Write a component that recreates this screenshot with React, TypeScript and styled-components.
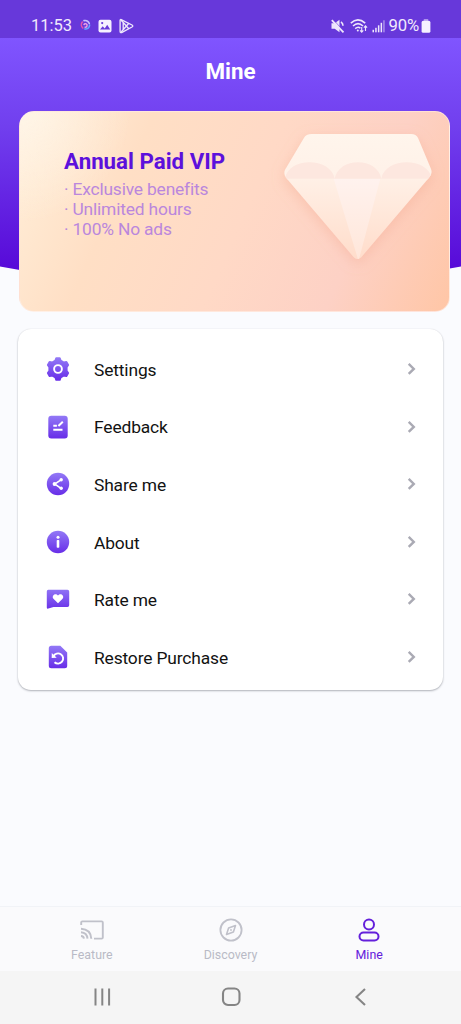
import React from "react";
import styled, { createGlobalStyle } from "styled-components";

const GlobalStyle = createGlobalStyle`
  * { box-sizing: border-box; }
  body { margin: 0; background: #fafbfe; font-family: Roboto, "Liberation Sans", sans-serif; }
  svg { display: block; flex: none; }
`;

const Screen = styled.div`
  position: relative;
  width: 461px;
  height: 1024px;
  display: flex;
  flex-direction: column;
  overflow: hidden;
  background: #fafbfe;
`;

const Backdrop = styled.svg`
  position: absolute;
  top: 0;
  left: 0;
`;

const StatusBar = styled.header`
  position: relative;
  height: 37.5px;
  padding: 14px 30.5px 0 31px;
  display: flex;
  justify-content: space-between;
  background: #6738da;
  color: #f1eafd;
`;

const StatusGroup = styled.div<{ $gap: number }>`
  display: flex;
  align-items: center;
  gap: ${(p) => p.$gap}px;
  height: 23px;
`;

const Clock = styled.span`
  font-size: 16.5px;
  line-height: 23px;
`;

const BatteryLevel = styled.span`
  margin: 0 -2.5px 0 0;
  font-size: 16.7px;
  line-height: 23px;
  letter-spacing: -0.2px;
`;

const Title = styled.h1`
  position: relative;
  margin: 0;
  height: 73.5px;
  padding-top: 19px;
  font-size: 22.4px;
  line-height: 28px;
  font-weight: 700;
  text-align: center;
  color: #fff;
`;

const VipCard = styled.section`
  position: relative;
  flex: none;
  width: 431px;
  height: 201px;
  margin-left: 18.5px;
  padding: 36px 15.5px 0 44.5px;
  display: flex;
  justify-content: space-between;
  border-radius: 15px;
  border: 1px solid rgba(255, 238, 232, 0.65);
  background:
    radial-gradient(ellipse 110px 110px at 0 0, rgba(255, 248, 238, 0.7), rgba(255, 244, 226, 0) 100%),
    linear-gradient(114deg, #ffefd9 0%, #ffdfc5 26%, #ffd9c6 52%, #fdd1c5 76%, #ffc6a6 100%);
`;

const VipTitle = styled.h2`
  margin: 0 0 4px;
  font-size: 22.3px;
  line-height: 27px;
  font-weight: 700;
  color: #5c10dc;
`;

const VipLine = styled.p`
  margin: 0;
  font-size: 17.4px;
  line-height: 20px;
  letter-spacing: -0.18px;
  color: #ba87dd;
`;

const Gem = styled.svg`
  margin-top: -14px;
  overflow: visible;
`;

const MenuCard = styled.nav`
  flex: none;
  width: 425px;
  height: 361px;
  margin: 17px 0 0 18px;
  padding-top: 11.2px;
  border-radius: 13px;
  background: #fff;
  box-shadow: 0 1px 2px rgba(40, 45, 60, 0.35), 0 0 1px rgba(40, 45, 60, 0.12);
`;

const MenuRow = styled.div`
  height: 57.6px;
  padding: 0 24px 0 27px;
  display: flex;
  align-items: center;
`;

const MenuLabel = styled.span`
  flex: 1;
  margin-left: 23px;
  padding-top: 1.5px;
  font-size: 17.4px;
  line-height: 22px;
  letter-spacing: -0.14px;
  color: #121212;
`;

const TabBar = styled.nav`
  height: 65px;
  margin-top: auto;
  padding: 0 22.5px;
  display: flex;
  background: #fafafc;
  border-top: 1px solid #f1f3f7;
`;

const Tab = styled.div<{ $active?: boolean }>`
  flex: 1;
  padding-top: 10px;
  display: flex;
  flex-direction: column;
  align-items: center;
  gap: 4px;
  font-size: 12.4px;
  line-height: 16px;
  color: ${(p) => (p.$active ? "#6420db" : "#b9bac6")};
`;

const SystemBar = styled.footer`
  flex: none;
  height: 53px;
  padding: 0 88px 2px 88px;
  display: flex;
  align-items: center;
  justify-content: space-between;
  background: #f5f5f5;
`;

function MenuIcon({ id, children }: { id: string; children: React.ReactNode }) {
  return (
    <svg width="26" height="26" viewBox="0 0 26 26" fill={`url(#${id})`}>
      <defs>
        <linearGradient id={id} gradientUnits="userSpaceOnUse" x1="0" y1="2" x2="0" y2="24">
          <stop offset="0" stopColor="#9278f6" />
          <stop offset="1" stopColor="#682ee8" />
        </linearGradient>
      </defs>
      {children}
    </svg>
  );
}

const menu = [
  {
    label: "Settings",
    icon: (
      <>
        <path
          stroke="url(#settings)"
          strokeWidth="2"
          strokeLinejoin="round"
          d="M11.300 2.200h3.400l.9 2.400 3.300 1.900 2.500-.5 1.700 3-1.500 2.200v3.600l1.500 2.200-1.700 3-2.500-.5-3.300 1.900-.9 2.400h-3.400l-.9-2.400-3.300-1.900-2.500.5-1.700-3 1.500-2.200v-3.600L2.900 9l1.700-3 2.500.5 3.300-1.900z"
        />
        <circle cx="13" cy="13" r="3.900" fill="none" stroke="#fff" strokeWidth="1.900" />
      </>
    ),
  },
  {
    label: "Feedback",
    icon: (
      <>
        <rect x="3.300" y="1.700" width="19.400" height="22.700" rx="3" />
        <path d="M8.300 11.700h3.600M13.400 12l4.400-4.300M8.300 15.700h9.200" fill="none" stroke="#fff" strokeWidth="2" />
      </>
    ),
  },
  {
    label: "Share me",
    icon: (
      <>
        <circle cx="13" cy="13" r="11.200" />
        <path d="m16 8.800-6.300 4.200 6.300 4.300" fill="none" stroke="#fff" strokeWidth="1.600" />
        <g fill="#fff">
          <circle cx="16.200" cy="8.700" r="1.700" />
          <circle cx="9.500" cy="13" r="1.900" />
          <circle cx="16.200" cy="17.300" r="1.700" />
        </g>
      </>
    ),
  },
  {
    label: "About",
    icon: (
      <>
        <circle cx="13" cy="13" r="11.200" />
        <g fill="#fff">
          <circle cx="13" cy="8.300" r="1.500" />
          <rect x="11.700" y="11" width="2.600" height="7.800" rx=".8" />
        </g>
      </>
    ),
  },
  {
    label: "Rate me",
    icon: (
      <>
        <path d="M3.300 3.800h19.200a1.700 1.700 0 0 1 1.700 1.700v13.700a1.700 1.700 0 0 1-1.700 1.700H8.500L3.300 22.600q-1.500.3-1.500-1.200V5.500a1.700 1.700 0 0 1 1.500-1.700z" />
        <path fill="#fff" d="m13 17.200-4.300-4.100c-2.900-2.900 1.500-7 4.300-3.500 2.800-3.500 7.200.6 4.300 3.500z" />
      </>
    ),
  },
  {
    label: "Restore Purchase",
    icon: (
      <>
        <path d="M6.300 1.800h9l6.900 6.800v13.100a2.500 2.500 0 0 1-2.500 2.500H6.300a2.500 2.500 0 0 1-2.500-2.500V4.300a2.500 2.500 0 0 1 2.500-2.500z" />
        <path d="M8.500 12.200a5.100 5.100 0 1 1 1 6" fill="none" stroke="#fff" strokeWidth="1.900" />
        <path d="m6.800 9-.1 5 5-.2z" fill="#fff" />
      </>
    ),
  },
];

function Chevron() {
  return (
    <svg width="14" height="16" viewBox="0 0 14 16" fill="none" stroke="#aaaab4" strokeWidth="2.400">
      <path d="m3.700 2.900 5.100 5-5.100 5" />
    </svg>
  );
}

function StatusLeft() {
  return (
    <StatusGroup $gap={6.5}>
      <Clock>11:53</Clock>
      <svg width="13" height="15" viewBox="0 0 13 15" fill="none" strokeLinecap="round">
        <path d="M3.800 10A4.400 4.400 0 0 1 3.300 4" stroke="#e454ad" strokeWidth="1.500" />
        <path d="M5 2.600a4.600 4.600 0 0 1 5.300 3" stroke="#c8bfff" strokeWidth="1.600" />
        <path d="M10.600 7a4.100 4.100 0 0 1-4.800 4" stroke="#66a5ff" strokeWidth="1.600" />
        <path d="M5 6.500a1.700 1.700 0 1 1 1 2.600" stroke="#f0a0e6" strokeWidth="1.400" />
      </svg>
      <svg width="14" height="14" viewBox="0 0 14 14">
        <rect x=".5" y=".8" width="13" height="12.800" rx="2" fill="#f5f0ff" />
        <path d="m2 10.500 2.700-3.300 2 2.300 2.500-3.700 3 4.700z" fill="#6738da" />
        <circle cx="4.200" cy="4.100" r="1.100" fill="#6738da" />
      </svg>
      <svg width="16" height="16" viewBox="0 0 16 16" fill="none" stroke="#eee7fc" strokeWidth="1.350" strokeLinejoin="round">
        <path d="M2.200 1.600 13 7q1.600 1 0 2L2.600 14.600Q1.100 15 1.100 13.300V2.500q0-1.200 1.100-.9z" />
        <path d="m2 2 7.800 8.700M2 14.300l7.800-9M4.200 4.700v6.500" />
      </svg>
    </StatusGroup>
  );
}

function StatusRight() {
  return (
    <StatusGroup $gap={4}>
      <svg width="16" height="16" viewBox="0 0 16 16">
        <path d="M1.500 5.300h3.200L9.500 1.800v12.400L4.700 10.700H1.500z" fill="#eee7fc" />
        <path d="M11 3.800q2 1.400 2 4" stroke="#eee7fc" strokeWidth="1.600" fill="none" />
        <path d="m3 1.300 11 12.200" stroke="#6738da" strokeWidth=".7" />
        <path d="m1.800 2.100 11.700 12.200" stroke="#eee7fc" strokeWidth="1.800" />
      </svg>
      <svg width="18" height="16" viewBox="0 0 18 16" fill="none" stroke="#eee7fc" strokeWidth="1.600">
        <path d="M.8 5.200q7-6.500 14.400 0M3 8q5-4.600 10 0M5.200 10.600q3-2.500 5.200-.3" />
        <circle cx="7.800" cy="12.600" r="1" fill="#eee7fc" stroke="none" />
        <path d="M11.700 9v5m-1.600-1.600 1.600 1.800 1.600-1.800M15.500 13v-5m-1.600 1.600 1.600-1.800 1.600 1.800" strokeWidth="1.100" />
      </svg>
      <svg width="13" height="14" viewBox="0 0 13 14" fill="#eee7fc">
        <rect x=".5" y="10.800" width="1.500" height="2.500" />
        <rect x="3.200" y="8.800" width="1.500" height="4.500" />
        <rect x="5.900" y="6.300" width="1.500" height="7" />
        <rect x="8.600" y="3.800" width="1.500" height="9.500" />
        <rect x="11.200" y="1.300" width="1.500" height="12" opacity=".5" />
      </svg>
      <BatteryLevel>90%</BatteryLevel>
      <svg width="10" height="14" viewBox="0 0 10 14" fill="#f5f0ff">
        <rect x="2.800" y="0" width="4.400" height="2" rx=".6" opacity=".5" />
        <rect x=".6" y="1.800" width="8.800" height="12" rx="1.600" />
      </svg>
    </StatusGroup>
  );
}

function Diamond() {
  return (
    <Gem width="149" height="127" viewBox="0 0 150 128">
      <defs>
        <linearGradient id="gem-top" x1="0" y1="0" x2="0" y2="1">
          <stop offset="0" stopColor="#fff5ec" />
          <stop offset="1" stopColor="#fff1e8" />
        </linearGradient>
        <linearGradient id="gem-side" x1="0" y1="0" x2="0" y2="1">
          <stop offset="0" stopColor="#fff0e6" />
          <stop offset="1" stopColor="#ffdcca" />
        </linearGradient>
        <linearGradient id="gem-mid" x1="0" y1="0" x2="0" y2="1">
          <stop offset="0" stopColor="#fff2ee" />
          <stop offset="1" stopColor="#ffe6d9" />
        </linearGradient>
        <filter id="gem-shadow" x="-20%" y="-20%" width="140%" height="150%">
          <feDropShadow dx="0" dy="4" stdDeviation="7" floodColor="#f3a488" floodOpacity=".4" />
        </filter>
        <clipPath id="gem-clip">
          <path d="M28 0H128q5 0 7 4L148 35q2 5-2 9L78 124q-4 4-8 0L2 44q-3-4-1-8L20 4q2-4 8-4z" />
        </clipPath>
      </defs>
      <g filter="url(#gem-shadow)">
        <g clipPath="url(#gem-clip)">
          <rect width="150" height="46" fill="url(#gem-top)" />
          <rect y="45" width="150" height="83" fill="url(#gem-side)" />
          <path d="M50 45H97L75 128z" fill="url(#gem-mid)" />
          <path d="M1 45C4 23 47 23 51 45C55 23 94 23 98 45C102 23 145 23 149 45z" fill="#fde7df" />
        </g>
      </g>
    </Gem>
  );
}

export default function App() {
  return (
    <Screen>
      <GlobalStyle />
      <Backdrop width="461" height="310" viewBox="0 0 461 310">
        <defs>
          <linearGradient id="hero" gradientUnits="userSpaceOnUse" x1="0" y1="37" x2="0" y2="272">
            <stop offset="0" stopColor="#8055ff" />
            <stop offset=".38" stopColor="#713fee" />
            <stop offset="1" stopColor="#5709d8" />
          </linearGradient>
        </defs>
        <path d="M0 0H461V266.500Q230 310 0 266.500z" fill="url(#hero)" />
      </Backdrop>
      <StatusBar>
        <StatusLeft />
        <StatusRight />
      </StatusBar>
      <Title>Mine</Title>
      <VipCard>
        <div>
          <VipTitle>Annual Paid VIP</VipTitle>
          <VipLine>· Exclusive benefits</VipLine>
          <VipLine>· Unlimited hours</VipLine>
          <VipLine>· 100% No ads</VipLine>
        </div>
        <Diamond />
      </VipCard>
      <MenuCard>
        {menu.map(({ label, icon }) => (
          <MenuRow key={label}>
            <MenuIcon id={label.split(" ")[0].toLowerCase()}>{icon}</MenuIcon>
            <MenuLabel>{label}</MenuLabel>
            <Chevron />
          </MenuRow>
        ))}
      </MenuCard>
      <TabBar>
        <Tab>
          <svg width="26" height="26" viewBox="0 0 26 26" fill="none" stroke="#c0c1ca" strokeWidth="1.900">
            <path d="M2.200 8V5.600q0-1.200 1.200-1.200h19.200q1.200 0 1.200 1.200v14.800q0 1.200-1.200 1.200H15" />
            <path d="M2 11.700q9.800.5 10.300 10M2 15.300q6 .5 6.500 6.400M2 19q2.700.2 2.900 2.700" />
          </svg>
          Feature
        </Tab>
        <Tab>
          <svg width="26" height="26" viewBox="0 0 26 26" fill="none" stroke="#c0c1ca" strokeWidth="1.800">
            <circle cx="13" cy="13" r="10.600" />
            <path d="m17.500 8.500-2.100 6.400-6.900 2.600 2.100-6.400z" strokeWidth="1.600" strokeLinejoin="round" />
            <circle cx="13" cy="13" r=".9" fill="#c0c1ca" stroke="none" />
          </svg>
          Discovery
        </Tab>
        <Tab $active>
          <svg width="26" height="26" viewBox="0 0 26 26" fill="none" stroke="#6420db" strokeWidth="2">
            <circle cx="13" cy="7.400" r="5" />
            <rect x="3.500" y="15.500" width="19" height="8" rx="4" />
          </svg>
          Mine
        </Tab>
      </TabBar>
      <SystemBar>
        <svg width="28" height="24" viewBox="0 0 28 24" stroke="#858585" strokeWidth="2">
          <path d="M7.500 3.500v17M14.300 3.500v17M21.100 3.500v17" />
        </svg>
        <svg width="24" height="24" viewBox="0 0 24 24" fill="none" stroke="#858585" strokeWidth="2.100">
          <rect x="2" y="3.500" width="16.500" height="16.500" rx="5" />
        </svg>
        <svg width="24" height="24" viewBox="0 0 24 24" fill="none" stroke="#858585" strokeWidth="2.100">
          <path d="m16 4-8.500 8 8.500 8" />
        </svg>
      </SystemBar>
    </Screen>
  );
}
